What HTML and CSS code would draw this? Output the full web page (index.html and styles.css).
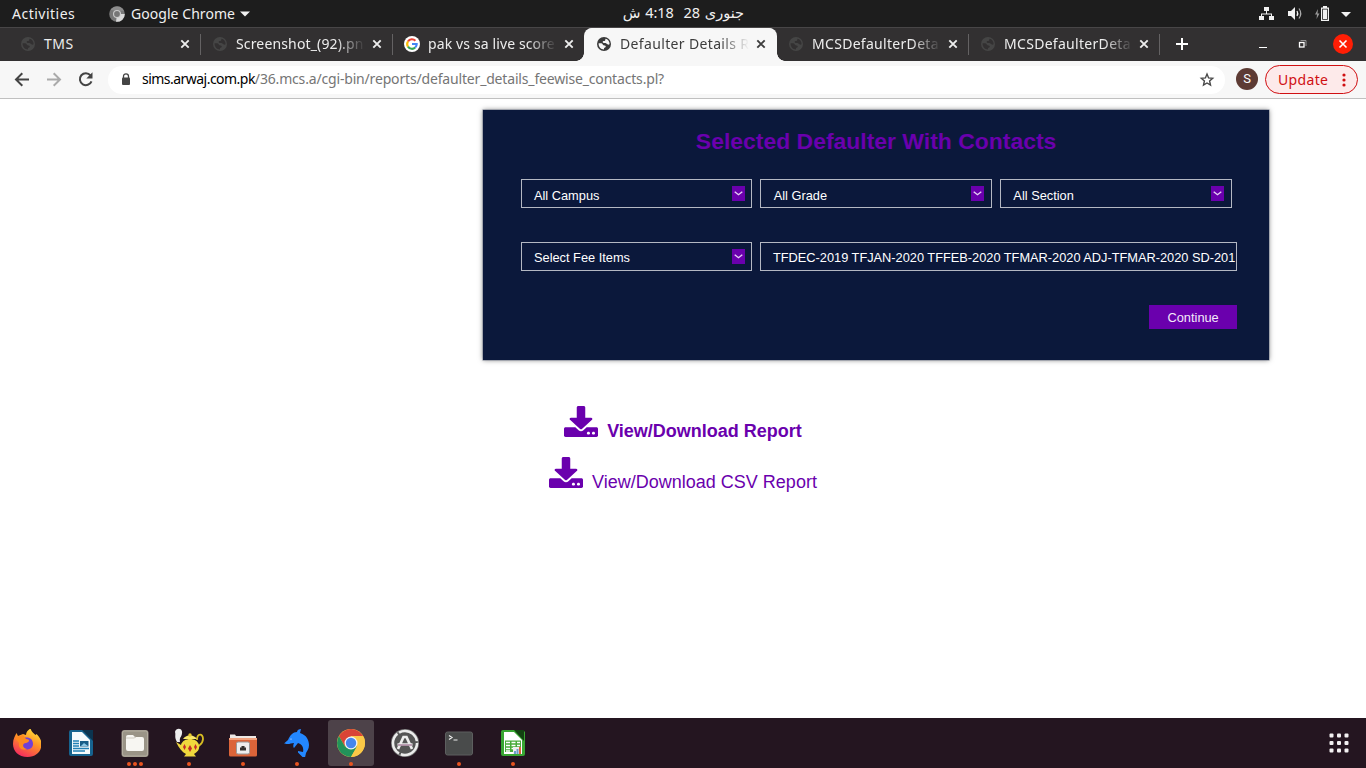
FILE: index.html
```html
<!DOCTYPE html>
<html lang="en">
<head>
<meta charset="utf-8">
<title>Defaulter Details Report</title>
<link rel="stylesheet" href="styles.css">
</head>
<body>
<svg width="0" height="0" class="defs">
<defs>
<symbol id="globe" viewBox="2 2 20 20"><path d="M12 2a10 10 0 1 0 0 20 10 10 0 0 0 0-20zM4.3 11 8 11c2 0 2 3 4 3s2.500 .5 2.500 1.800-2.500 1.200-2.500 2.400V20C7.500 19.700 4 16 4.300 11zM14 4.500C17.500 5 20 8.500 20 12c-1 1.600-2 .7-3 .5-1.500-.3-1.500-2-3-2h-2.500c-1.800 0-1.800-2.500 0-2.700 1.800 0 2.500-.3 2.500-3.300z" fill-rule="evenodd" fill="currentColor"/></symbol>
<symbol id="x" viewBox="0 0 10 10"><path d="M1.300 1.300 8.700 8.700M8.700 1.300 1.300 8.700" stroke="currentColor" stroke-width="1.900"/></symbol>
<symbol id="chev" viewBox="0 0 13 15"><path d="M2.700 5.700l3.800 3 3.800-3" fill="none" stroke="#e6cff5" stroke-width="1.400"/></symbol>
<symbol id="dl" viewBox="0 0 512 512" preserveAspectRatio="none"><path fill="currentColor" d="M216 0h80c13.300 0 24 10.700 24 24v168h87.700c17.800 0 26.700 21.500 14.100 34.100L269.700 378.300c-7.500 7.500-19.800 7.500-27.300 0L90.100 226.100c-12.600-12.600-3.700-34.100 14.100-34.100H192V24c0-13.300 10.700-24 24-24zm296 376v112c0 13.300-10.700 24-24 24H24c-13.300 0-24-10.700-24-24V376c0-13.300 10.700-24 24-24h146.700l49 49c20.100 20.100 52.500 20.100 72.600 0l49-49H488c13.300 0 24 10.700 24 24zm-120 72c0-13-11-24-24-24s-24 11-24 24 11 24 24 24 24-11 24-24zm76 0c0-13-11-24-24-24s-24 11-24 24 11 24 24 24 24-11 24-24z"/></symbol>
</defs>
</svg>

<header class="topbar">
  <span class="activities">Activities</span>
  <svg class="app-icon" width="16" height="16" viewBox="0 0 16 16"><circle cx="8" cy="8" r="7.800" fill="#777"/><path d="M8 8h7.800A7.800 7.800 0 0 1 7 15.800z" fill="#d8d8d8"/><path d="M1.500 4A7.800 7.800 0 0 1 15 4.700H8z" fill="#8d8d8d"/><circle cx="8" cy="8" r="4" fill="#ccc"/><circle cx="8" cy="8" r="2.900" fill="#777"/></svg>
  <span class="app-name">Google Chrome</span>
  <svg class="app-arrow" width="10" height="6"><path d="M0 .5h10L5 5.500z" fill="#f2f2f2"/></svg>
  <span class="clock" dir="rtl">جنوری 28&nbsp; 4:18 ش</span>
  <svg class="tray" width="98" height="20" viewBox="0 0 98 20">
    <g fill="#f2f2f2"><rect x="5" y="3" width="5" height="4"/><rect x="0" y="12" width="5" height="4"/><rect x="10" y="12" width="5" height="4"/><path d="M2 12V9.500h5V7h1v2.500h5V12h-1v-1.500H3V12z"/>
    <path d="M29 7h3l4-4v13l-4-4h-3z"/><path d="M62 3.500h2V2h4v1.500h2V17h-8zM63.200 4.700v11.100h5.600V4.700z" fill-rule="evenodd"/><path d="M64 5.500h4v9.500h-4z"/><path d="M82 8h10l-5 5z"/></g>
    <path d="M38 7q1.500 2.500 0 5" fill="none" stroke="#f2f2f2" stroke-width="1.300"/><path d="M40 4.500q3.500 5 0 10" fill="none" stroke="#aaa" stroke-width="1.200"/>
    <path d="M59 5l-3 5.500h2l-.5 4.500 3-5.500h-2z" fill="#999"/>
  </svg>
</header>

<nav class="tabs">
  <div class="tab"><svg class="fav"><use href="#globe"/></svg><span class="tms">TMS</span><svg class="close"><use href="#x"/></svg></div>
  <div class="tab"><svg class="fav"><use href="#globe"/></svg><span class="fade shot">Screenshot_(92).pn</span><svg class="close"><use href="#x"/></svg></div>
  <div class="tab last-before"><svg class="gfav" viewBox="0 0 16 16"><circle cx="8" cy="8" r="8" fill="#fff"/><g fill="none" stroke-width="2.100"><path d="M4 5.300A4.700 4.700 0 0 1 11.400 4.800" stroke="#ea4335"/><path d="M4 5.300a4.900 4.900 0 0 0 0 5.400" stroke="#fbbc05"/><path d="M4 10.700a4.700 4.700 0 0 0 7.200.8" stroke="#34a853"/><path d="M11.200 11.500A4.700 4.700 0 0 0 12.700 8H8" stroke="#4285f4"/></g></svg><span class="fade pak">pak vs sa live score</span><svg class="close"><use href="#x"/></svg></div>
  <div class="tab active"><svg class="fav"><use href="#globe"/></svg><span class="fade details">Defaulter Details R</span><svg class="close"><use href="#x"/></svg></div>
  <div class="tab"><svg class="fav"><use href="#globe"/></svg><span class="fade mcs">MCSDefaulterDeta</span><svg class="close"><use href="#x"/></svg></div>
  <div class="tab final"><svg class="fav"><use href="#globe"/></svg><span class="fade mcs">MCSDefaulterDeta</span><svg class="close"><use href="#x"/></svg></div>
  <svg class="newtab" width="12" height="12"><path d="M6 0v12M0 6h12" stroke="#fff" stroke-width="2"/></svg>
  <svg class="winctl" width="100" height="22" viewBox="0 0 100 22"><path d="M5 13.500h8" stroke="#fff"/><path d="M46.500 6.500h5.500V12" fill="none" stroke="#aaa" stroke-width=".8"/><rect x="45.500" y="8.500" width="4.500" height="4.500" fill="none" stroke="#fff" stroke-width="1.300"/><circle cx="89" cy="10" r="10" fill="#ff1e05"/><path d="M85.500 6.500l7 7M92.500 6.500l-7 7" stroke="#fff" stroke-width="1.600"/></svg>
</nav>

<div class="toolbar">
  <svg class="nav-icons" width="96" height="20" viewBox="0 0 96 20" fill="none"><path d="M29 9.500H16M22.300 3.200 16 9.500l6.300 6.300" stroke="#444" stroke-width="2"/><path d="M47 9.500h13M53.700 3.200 60 9.500l-6.300 6.300" stroke="#aaa" stroke-width="2"/><path d="M90.500 5.300A6 6 0 1 0 91.500 11.300" stroke="#444" stroke-width="2"/><path d="M92.500 2.300v6.200h-6.200z" fill="#444"/></svg>
  <div class="address">
    <svg class="lock" width="10" height="13" viewBox="0 0 10 13"><path d="M2.500 5V3.300a2.500 2.500 0 0 1 5 0V5" fill="none" stroke="#444" stroke-width="1.300"/><rect x="1" y="4.500" width="8" height="7.500" rx="1" fill="#444"/></svg>
    <span class="url"><b>sims.arwaj.com.pk</b>/36.mcs.a/cgi-bin/reports/defaulter_details_feewise_contacts.pl?</span>
    <svg class="star" width="16" height="16" viewBox="0 0 16 16"><path d="M8 2l1.600 3.900 4.100.4-3.100 2.700.9 4.100L8 11l-3.500 2.100.9-4.100-3.100-2.700 4.100-.4z" fill="none" stroke="#484848" stroke-width="1.400"/></svg>
  </div>
  <span class="avatar">S</span>
  <div class="update"><span>Update</span><svg width="4" height="14"><g fill="#d00f12"><circle cx="2" cy="2" r="1.600"/><circle cx="2" cy="7" r="1.600"/><circle cx="2" cy="12" r="1.600"/></g></svg></div>
</div>

<main class="page">
  <section class="panel">
    <h1>Selected Defaulter With Contacts</h1>
    <div class="row first">
      <div class="select"><span>All Campus</span><svg><use href="#chev"/></svg></div>
      <div class="select"><span>All Grade</span><svg><use href="#chev"/></svg></div>
      <div class="select"><span>All Section</span><svg><use href="#chev"/></svg></div>
    </div>
    <div class="row second">
      <div class="select"><span>Select Fee Items</span><svg><use href="#chev"/></svg></div>
      <div class="items"><span>TFDEC-2019 TFJAN-2020 TFFEB-2020 TFMAR-2020 ADJ-TFMAR-2020 SD-201</span></div>
    </div>
    <div class="actions"><button>Continue</button></div>
  </section>
  <div class="links">
    <a class="bold"><svg><use href="#dl"/></svg><span>View/Download Report</span></a>
    <a><svg><use href="#dl"/></svg><span>View/Download CSV Report</span></a>
  </div>
</main>

<footer class="dock">
  <div class="app"><svg viewBox="0 0 28 28"><defs><linearGradient id="ff" x1=".8" y1="0" x2=".3" y2="1"><stop offset="0" stop-color="#ffe63c"/><stop offset=".45" stop-color="#ff9424"/><stop offset="1" stop-color="#f52860"/></linearGradient></defs><path d="M0 15C0 10 2 7 3.500 4L5 7l5-2 3 1c0-3 2-5 4.500-6.500 1 3 3 5 5 6.500l1-1c3 3 5 6 5 10 0 7-5 13-14 13S0 22 0 15z" fill="url(#ff)"/><path d="M9 10c4-3 11-2 11 5 0 5-6 7-10 4-3-2-3-5-1-9z" fill="#7140d6"/><path d="M2 9l8-3 3 4c4 0 4 3 0 4-4 0-4 5 1 6-5 2-9-1-8-6z" fill="#ff8a20"/></svg></div>
  <div class="app"><svg viewBox="0 0 28 28"><path d="M4 1h20a2 2 0 0 1 2 2v22a2 2 0 0 1-2 2H4a2 2 0 0 1-2-2V3a2 2 0 0 1 2-2z" fill="#16638f"/><path d="M5 3h10l8 8v14H5z" fill="#f5fafc"/><path d="M15 1h11v11z" fill="#0b344f"/><path d="M6 12h6M6 14.500h6M6 17h6M6 19.500h16M6 22h12" stroke="#2381b5" stroke-width="1.300"/><rect x="13" y="12" width="8.500" height="5.500" fill="#185d87"/><path d="M14 17l3-3 4 3z" fill="#8ac7e5"/></svg></div>
  <div class="app three"><svg viewBox="0 0 28 28"><rect x=".5" y="1" width="27" height="27" rx="3" fill="#9a9487"/><rect x="1.500" y="2" width="25" height="25" rx="2" fill="none" stroke="#b3ada0"/><path d="M5 8q0-2 2-2h5l2 2h7q2 0 2 2v10q0 2-2 2H7q-2 0-2-2z" fill="#f7f6f2"/><path d="M5 9h8l2-1" fill="none" stroke="#d0ccc2"/></svg></div>
  <div class="app one"><svg class="lamp" viewBox="0 0 30 30"><path d="M23 12c0-7 6-7 6-1 0 5-4 6-6 9" fill="none" stroke="#d7bd22" stroke-width="1.800"/><path d="M2 14l5 3c2-8 16-8 18 0 1 5-2 7-5 9l2 2.500H10l2-2.500c-4-2-7-6-10-12z" fill="#f0d83d"/><path d="M9 11c4-5 10-5 14 0z" fill="#fae969"/><circle cx="16" cy="7" r="1.700" fill="#e9c92d"/><path d="M10.500 16l1.500 3-1.500 3L9 19zM16 17l2 3.500-2 3.500-2-3.500zM21.500 16l1.500 3-1.500 3-1.500-3z" fill="#c52c2a"/><path d="M3 14C0 9 2 7 1 4c1-5 8-4 7 1 0 4-3 4-2 9z" fill="#eee"/></svg></div>
  <div class="app one"><svg viewBox="0 0 28 28"><path d="M1 9V5.500h5l1 1.500h20v5H1z" fill="#eee8e5"/><path d="M0 9h28v17a1.500 1.500 0 0 1-1.500 1.500h-25A1.500 1.500 0 0 1 0 26z" fill="#dc6439"/><path d="M0 9h28v2H0z" fill="#f2a27f"/><rect x="7.500" y="13" width="13" height="12" rx="1.500" fill="#eee" stroke="#999"/><path d="M11 21.500v-3h1.500v-1.500h3v1.500H17v3z" fill="#33312f"/></svg></div>
  <div class="app one"><svg viewBox="0 0 28 28"><path d="M1 14.500l4-3.500c2-5 5-8 9-8 0-2 2-3 4-3l-1 4c7 2 9 8 9 12 0 4-2 6-3 8l-1 4.500h-2l-5-5v-1.500l5 1c1-4-1-8-5-9l-4 5c-1-1-1-3 0-5-3 0-6 2-9 .5z" fill="#2387ff"/><circle cx="8" cy="10" r=".6" fill="#fff"/></svg></div>
  <div class="app one current"><svg viewBox="0 0 28 28"><circle cx="14" cy="14" r="14" fill="#fbc947"/><path d="M1.900 7A14 14 0 0 1 26.100 7H14L8 17.500z" fill="#d94436"/><path d="M1.900 7a14 14 0 0 0 12.100 21l6-10.500H8z" fill="#22935a"/><path d="M14 7.500h12.400A14 14 0 0 1 14 28l6-10.500z" fill="#fbc947"/><circle cx="14" cy="14" r="6.500" fill="#f3f3f3"/><circle cx="14" cy="14" r="5.200" fill="#4586ed"/></svg></div>
  <div class="app"><svg viewBox="0 0 28 28"><circle cx="14" cy="14" r="14" fill="#777"/><circle cx="14" cy="14" r="12" fill="#555" stroke="#ececec" stroke-width="2.500" stroke-dasharray="23 2"/><path d="M7 20 12.500 8h3L21 20M6.500 15.500h15" fill="none" stroke="#eee" stroke-width="2.700"/><path d="M7 16h14" stroke="#8b527b"/></svg></div>
  <div class="app one"><svg viewBox="0 0 28 28"><rect x=".5" y="3" width="27" height="23" rx="2" fill="#494b4b" stroke="#5d5f5f"/><path d="M4 6.500l3 2-3 2M8.500 11h4" fill="none" stroke="#eee" stroke-width="1.200"/></svg></div>
  <div class="app one"><svg viewBox="0 0 28 28"><path d="M4 1h20l2 2v22a2 2 0 0 1-2 2H4a2 2 0 0 1-2-2V3a2 2 0 0 1 2-2z" fill="#38a632"/><path d="M5 3h10l8 8v14H5z" fill="#fff"/><path d="M15 1h10v11z" fill="#124111"/><path d="M6 11.500h16V23H6z" fill="#48aa39"/><path d="M7 13.500h4M12.500 13.500h4M18 13.500h3M7 16.500h4M12.500 16.500h4M18 16.500h3M7 19.500h4M12.500 19.500h3M7 22h4" stroke="#fff" stroke-width="1.300"/><path d="M14 18h8v7h-8z" fill="#eee"/><path d="M15 22v3h2v-3zM17.500 20v5h2v-5z" fill="#6c9ecb"/><path d="M20 18h2v7h-2z" fill="#dd603a"/></svg></div>
  <svg class="grid" width="20" height="20" viewBox="0 0 20 20"><g fill="#f3f1f2"><rect x=".5" y=".5" width="4" height="4" rx="1"/><rect x="8" y=".5" width="4" height="4" rx="1"/><rect x="15.500" y=".5" width="4" height="4" rx="1"/><rect x=".5" y="8" width="4" height="4" rx="1"/><rect x="8" y="8" width="4" height="4" rx="1"/><rect x="15.500" y="8" width="4" height="4" rx="1"/><rect x=".5" y="15.500" width="4" height="4" rx="1"/><rect x="8" y="15.500" width="4" height="4" rx="1"/><rect x="15.500" y="15.500" width="4" height="4" rx="1"/></g></svg>
</footer>
</body>
</html>
```
FILE: styles.css
```css
* { box-sizing: border-box; }
body { margin: 0; width: 1366px; height: 768px; overflow: hidden; display: flex; flex-direction: column; background: #fff; font-family: "Noto Sans", "DejaVu Sans", sans-serif; }
svg { display: block; flex: none; }
.defs { position: absolute; }

.topbar { height: 27px; background: #1d1d1d; color: #f0f0f0; display: flex; align-items: center; padding-left: 12px; font-size: 14px; line-height: 26px; white-space: nowrap; }
.activities { width: 97px; letter-spacing: .5px; }
.app-icon { margin-right: 6px; }
.app-name { width: 109px; letter-spacing: .05px; }
.clock { width: 122px; margin: -3px 0 0 372px; font-size: 14.500px; word-spacing: 1px; text-align: start; }
.tray { margin-left: auto; margin-right: 9px; }

.tabs { height: 34px; background: #323031; border-top: 1px solid #484647; display: flex; align-items: center; padding-left: 8px; color: #ededed; font-size: 14px; }
.tab { width: 192px; height: 33px; flex: none; display: flex; align-items: center; padding-left: 13px; position: relative; white-space: nowrap; }
.tab::after { content: ""; position: absolute; right: -1px; top: 6px; width: 1px; height: 21px; background: #646263; }
.last-before::after, .active::after { display: none; }
.fav { width: 14px; height: 14px; color: #454545; margin: -1px 9px 0 0; }
.gfav { width: 16px; height: 16px; margin: -1px 8px 0 -1px; }
.tab > span { width: 131px; line-height: 30px; margin-top: -2px; }
.tms { letter-spacing: .5px; }
.shot { letter-spacing: .15px; }
.pak { letter-spacing: .12px; }
.details { letter-spacing: .35px; }
.mcs { letter-spacing: .3px; }
.fade { -webkit-mask-image: linear-gradient(90deg, #000 100px, transparent 129px); mask-image: linear-gradient(90deg, #000 100px, transparent 129px); }
.close { width: 10px; height: 10px; margin: -1px 0 0 5px; }
.final { width: 191px; }
.final .close { margin-left: 4px; }
.active { background: #f7f7f7; color: #3d3d3d; border-radius: 8px 8px 0 0; box-shadow: 1px 0 #f7f7f7; }
.active .fav { color: #3a3a3a; }
.active::before { content: ""; position: absolute; left: -8px; bottom: 0; width: 8px; height: 8px; background: radial-gradient(circle at 0 0, #323031 7.500px, #f7f7f7 8px); }
.active::after { display: block; right: -9px; top: auto; bottom: 0; width: 8px; height: 8px; background: radial-gradient(circle at 100% 0, #323031 7.500px, #f7f7f7 8px); }
.newtab { margin: -1px 0 0 17px; }
.winctl { margin-left: auto; margin-right: 12px; }

.toolbar { height: 38px; background: #f7f7f7; border-bottom: 1px solid #c0c0c0; display: flex; align-items: center; }
.address { height: 28px; width: 1117px; margin-left: 12px; border-radius: 14px; background: #fff; display: flex; align-items: center; padding-left: 13px; }
.lock { margin: -1px 11px 0 0; }
.url { font-size: 14px; color: #757575; white-space: nowrap; line-height: 26px; letter-spacing: -.17px; margin-top: -1px; }
.url b { color: #000; font-weight: 400; letter-spacing: -.53px; }
.star { margin-left: auto; margin-right: 10px; }
.avatar { width: 22px; height: 22px; border-radius: 50%; background: #5d3b34; color: #fff; margin: -1px 0 0 11px; font: 13px/22px Roboto, sans-serif; text-align: center; }
.update { width: 93px; height: 29px; margin-left: 7px; border: 1px solid #d00f12; border-radius: 15px; background: #fdeaea; color: #d00f12; display: flex; align-items: center; justify-content: space-between; padding: 0 11px 0 12px; font-size: 14px; letter-spacing: .35px; }

.page { display: flow-root; height: 619px; font-family: "Liberation Sans", sans-serif; }
.panel { width: 786.600px; height: 250px; margin: 10.600px 0 0 482.800px; background: #0b183b; box-shadow: 0 0 0 .5px #7e8494, 0 0 5px rgba(0,0,0,.5); padding: 18.400px 32px 0 38px; color: #fff; font-size: 12.800px; }
h1 { margin: 0 -32px 0 -38px; color: #6a00ad; font-size: 22.940px; line-height: 26px; font-weight: 700; text-align: center; }
.row { display: flex; gap: 8.200px; height: 29px; }
.first { margin-top: 25px; }
.second { margin-top: 34px; }
.select { width: 231.500px; height: 29px; border: 1px solid #b4b8c3; display: flex; justify-content: space-between; padding: 6px 6.800px 0 12.200px; }
.select span { line-height: 19px; }
.second .select span { line-height: 17px; }
.select svg { width: 13px; height: 15px; background: #6a00ad; }
.items { width: 476.500px; border: 1px solid #b4b8c3; padding: 6px 2px 0 11.500px; }
.items span { display: block; white-space: nowrap; line-height: 17px; letter-spacing: -.01px; }
.actions { display: flex; justify-content: flex-end; margin-top: 34px; }
button { width: 88.500px; height: 24.500px; border: 0; padding: 0; background: #6a00ad; color: #f4eafa; font: 12.800px "Liberation Sans", sans-serif; }
.links { width: 1366px; padding-top: 46px; color: #6a00ad; font-size: 18px; display: flex; flex-direction: column; gap: 20px; align-items: center; }
.links a { display: flex; height: 31px; }
.links svg { width: 34px; height: 31px; margin-right: 9px; }
.links span { line-height: 21px; margin-top: 15px; }
.bold { font-weight: 700; }

.dock { height: 50px; background: #241520; display: flex; align-items: center; }
.app { width: 54px; height: 50px; display: flex; justify-content: center; padding-top: 11px; position: relative; }
.app svg { width: 28px; height: 28px; }
.app .lamp { width: 30px; height: 30px; margin-top: -1px; }
.one::after, .three::after { content: ""; position: absolute; left: 25px; bottom: 2px; width: 4px; height: 4px; border-radius: 50%; background: #e95420; }
.three::after { box-shadow: -6px 0 #e95420, 6px 0 #e95420; }
.current::before { content: ""; position: absolute; left: 4px; top: 2px; width: 46px; height: 46px; border-radius: 3px; background: #4d4249; }
.current svg { position: relative; }
.grid { margin-left: auto; margin-right: 17px; }
```
